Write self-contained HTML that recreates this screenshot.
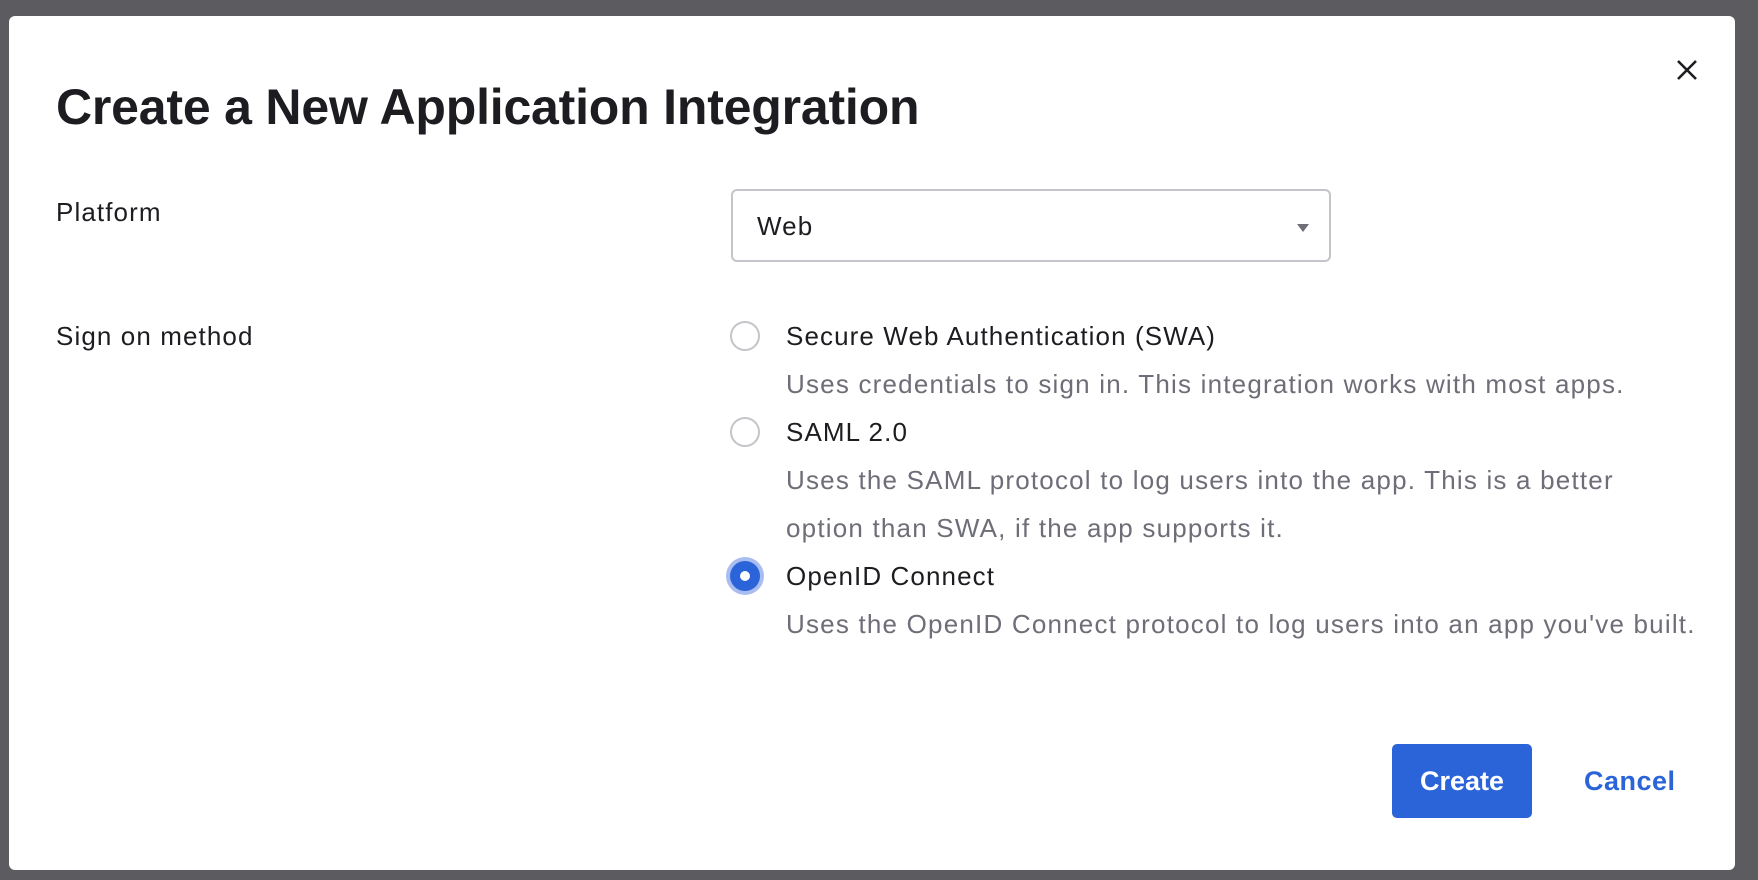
<!DOCTYPE html>
<html><head><meta charset="utf-8"><style>
*{margin:0;padding:0;box-sizing:border-box}
html,body{width:1758px;height:880px;overflow:hidden;background:#5b5b60;font-family:"Liberation Sans",sans-serif}
.modal{position:absolute;left:9px;top:16px;width:1726px;height:854px;background:#fff;border-radius:6px}
.a{position:absolute;white-space:nowrap}
h1{position:absolute;left:47px;top:62px;font-size:50px;font-weight:bold;color:#1d1d21;letter-spacing:-0.2px;white-space:nowrap}
.lbl{font-size:26px;color:#1d1d21;letter-spacing:1.1px}
.desc{font-size:26px;color:#6e6e78;letter-spacing:1.2px}
.radio{position:absolute;width:30px;height:30px;border-radius:50%;border:2px solid #c4c4ca;background:#fff}
.sel{border:none;background:#2b63d8;box-shadow:0 0 0 4px #a9bdf0}
.sel:after{content:"";position:absolute;left:10px;top:10px;width:10px;height:10px;border-radius:50%;background:#fff}
</style></head><body>
<div class="modal">
<h1>Create a New Application Integration</h1>
<svg class="a" style="left:1667px;top:43px" width="22" height="22" viewBox="0 0 22 22"><path d="M2 2L20 20M20 2L2 20" stroke="#1d1d21" stroke-width="2.6"/></svg>
<div class="a lbl" style="left:47px;top:181px">Platform</div>
<div class="a" style="left:722px;top:173px;width:600px;height:73px;border:2px solid #c4c4ca;border-radius:6px"></div>
<div class="a lbl" style="left:748px;top:195px">Web</div>
<svg class="a" style="left:1288px;top:208px" width="12" height="8"><path d="M0 0H12L6 8Z" fill="#6e6e78"/></svg>
<div class="a lbl" style="left:47px;top:305px">Sign on method</div>
<div class="radio" style="left:721px;top:305px"></div>
<div class="a lbl" style="left:777px;top:305px">Secure Web Authentication (SWA)</div>
<div class="a desc" style="left:777px;top:353px">Uses credentials to sign in. This integration works with most apps.</div>
<div class="radio" style="left:721px;top:401px"></div>
<div class="a lbl" style="left:777px;top:401px">SAML 2.0</div>
<div class="a desc" style="left:777px;top:449px">Uses the SAML protocol to log users into the app. This is a better</div>
<div class="a desc" style="left:777px;top:497px">option than SWA, if the app supports it.</div>
<div class="radio sel" style="left:721px;top:545px"></div>
<div class="a lbl" style="left:777px;top:545px">OpenID Connect</div>
<div class="a desc" style="left:777px;top:593px">Uses the OpenID Connect protocol to log users into an app you've built.</div>
<div class="a" style="left:1383px;top:728px;width:140px;height:74px;background:#2b63d8;border-radius:5px;color:#fff;font-size:27px;font-weight:bold;text-align:center;line-height:74px">Create</div>
<div class="a" style="left:1575px;top:750px;color:#2b63d8;font-size:27px;font-weight:bold;letter-spacing:0.5px">Cancel</div>
</div>
</body></html>
